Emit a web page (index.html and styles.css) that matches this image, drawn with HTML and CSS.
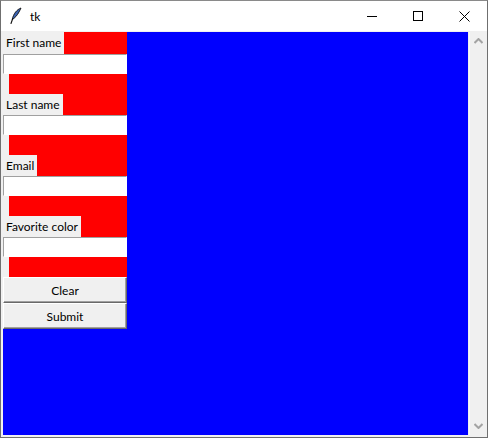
FILE: index.html
```html
<!DOCTYPE html>
<html lang="en">
<head>
  <meta charset="UTF-8">
  <title>tk</title>
  <link rel="stylesheet" href="styles.css">
</head>
<body>
  <div class="window">
    <div class="titlebar">
      <svg class="feather" width="16" height="18" viewBox="0 0 16 18">
        <path d="M13 1 C9 2.5 5.5 6.5 4.2 12.5 C6.5 11.5 9.5 8 11 5 C11.8 3.5 12.5 2.2 13 1 Z" fill="#3a62b0" stroke="#111" stroke-width="0.9" stroke-linejoin="round"/>
        <path d="M4.6 12 L3 16.5" stroke="#111" stroke-width="1.1" stroke-linecap="round"/>
      </svg>
      <span class="title">tk</span>
      <div class="controls">
        <span class="ctl"><svg width="10" height="10" viewBox="0 0 10 10"><path d="M0 5.5 H10" stroke="#000" stroke-width="1"/></svg></span>
        <span class="ctl"><svg width="10" height="10" viewBox="0 0 10 10"><rect x="0.5" y="0.5" width="9" height="9" fill="none" stroke="#000" stroke-width="1"/></svg></span>
        <span class="ctl"><svg width="11" height="11" viewBox="0 0 11 11"><path d="M0.5 0.5 L10.5 10.5 M10.5 0.5 L0.5 10.5" stroke="#000" stroke-width="1"/></svg></span>
      </div>
    </div>
    <div class="client">
      <div class="canvas">
        <div class="panel">
          <div class="field">
            <span class="label">First name</span>
            <input class="entry" type="text">
            <div class="gap"></div>
          </div>
          <div class="field">
            <span class="label">Last name</span>
            <input class="entry" type="text">
            <div class="gap"></div>
          </div>
          <div class="field">
            <span class="label">Email</span>
            <input class="entry" type="text">
            <div class="gap"></div>
          </div>
          <div class="field">
            <span class="label">Favorite color</span>
            <input class="entry" type="text">
            <div class="gap"></div>
          </div>
          <button class="btn" type="button">Clear</button>
          <button class="btn" type="button">Submit</button>
        </div>
      </div>
      <div class="scrollbar">
        <svg width="9" height="6" viewBox="0 0 9 6"><path d="M0.5 5 L4.5 1 L8.5 5" fill="none" stroke="#a3a3a3" stroke-width="2"/></svg>
        <svg width="9" height="6" viewBox="0 0 9 6"><path d="M0.5 1 L4.5 5 L8.5 1" fill="none" stroke="#a3a3a3" stroke-width="2"/></svg>
      </div>
    </div>
  </div>
</body>
</html>
```

FILE: styles.css
```css
body { margin: 0; font-family: Lato, "Noto Sans", sans-serif; font-size: 12px; }
.window { width: 488px; height: 438px; box-sizing: border-box; border: 1px solid #6f6f6f; border-top-color: #8a8a8a; display: flex; flex-direction: column; background: #f0f0f0; }
.titlebar { height: 30px; background: #fff; display: flex; align-items: center; flex-shrink: 0; }
.feather { margin-left: 7px; }
.title { margin-left: 6px; font-size: 12px; color: #000; }
.controls { margin-left: auto; display: flex; height: 100%; }
.ctl { width: 46px; display: flex; align-items: center; justify-content: center; }
.client { flex: 1; display: flex; padding: 1px 0 2px 2px; min-height: 0; }
.canvas { flex: 1; background: #0000ff; display: flex; align-items: flex-start; }
.panel { width: 124px; background: #ff0000; display: flex; flex-direction: column; align-items: flex-start; }
.field { display: flex; flex-direction: column; align-items: flex-start; width: 100%; }
.field:first-child .label { height: 22px; line-height: 22px; }
.label { display: block; height: 21px; line-height: 21px; padding: 0 3px 0 3px; background: #f0f0f0; color: #000; white-space: nowrap; }
.entry { display: block; width: 100%; height: 20px; box-sizing: border-box; margin: 0; padding: 0 2px; border: 1px solid #fff; border-top-color: #a0a0a0; border-left-color: #a0a0a0; background: #fff; font: inherit; outline: none; }
.gap { width: 100%; height: 20px; box-sizing: border-box; border-left: 6px solid #f0f0f0; }
.btn { display: block; width: 100%; height: 26px; margin: 0; padding: 0; box-sizing: border-box; background: #f0f0f0; border: 1px solid #fff; border-right-color: #696969; border-bottom-color: #696969; box-shadow: inset -1px -1px 0 #a0a0a0; font: inherit; color: #000; }
.scrollbar { width: 18px; margin-left: 1px; border-left: 1px solid #fafafa; background: #f0f0f0; display: flex; flex-direction: column; justify-content: space-between; align-items: center; padding: 6px 0 6px 0; box-sizing: border-box; }
```
